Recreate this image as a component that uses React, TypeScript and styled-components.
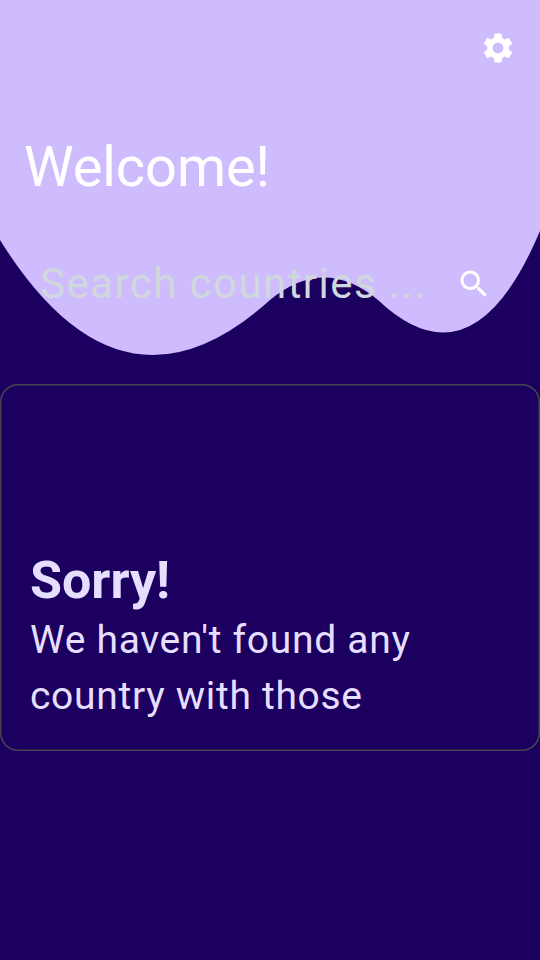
import React from "react";
import styled, { createGlobalStyle } from "styled-components";

const GlobalStyle = createGlobalStyle`
  * { box-sizing: border-box; }
  body { margin: 0; background: #1b005f; font-family: Roboto, sans-serif; }
`;

const Screen = styled.main`
  position: relative;
  display: flex;
  flex-direction: column;
  height: 960px;
  overflow: hidden;
  background: #1b005f;
`;

const Wave = styled.svg`
  position: absolute;
  inset: 0 0 auto 0;
  width: 540px;
  height: 360px;
`;

const Header = styled.header`
  position: relative;
  display: flex;
  flex-direction: column;
  height: 384px;
`;

const Toolbar = styled.div`
  display: flex;
  justify-content: flex-end;
  height: 96px;
  padding: 30px 24px 0 0;
`;

const IconButton = styled.button`
  display: flex;
  width: 36px;
  height: 36px;
  padding: 0;
  border: 0;
  background: none;
  color: #fff;

  svg { width: 36px; height: 36px; fill: currentColor; }
`;

const Title = styled.h1`
  margin: 38px 0 0 24px;
  color: #fff;
  font-size: 56px;
  font-weight: 400;
  line-height: 66px;
  letter-spacing: -0.1px;
`;

const SearchBar = styled.form`
  display: flex;
  align-items: center;
  justify-content: space-between;
  height: 60px;
  margin-top: 53px;
  padding: 1px 48px 0 40px;
`;

const SearchInput = styled.input`
  width: 400px;
  height: 50px;
  padding: 0;
  border: 0;
  outline: 0;
  background: transparent;
  color: #fff;
  font: 400 42px/50px Roboto, sans-serif;
  letter-spacing: 1.45px;

  &::placeholder { color: #cfd8dc; opacity: 1; }
`;

const Card = styled.section`
  display: flex;
  flex-direction: column;
  justify-content: flex-end;
  height: 366.5px;
  padding: 0 30px 27px;
  border-radius: 18px;
  box-shadow: inset 0 0 0 1.5px #49454f;
  color: #e6deff;
`;

const CardTitle = styled.h2`
  margin: 0;
  font-size: 52px;
  font-weight: 700;
  line-height: 62px;
`;

const CardText = styled.p`
  margin: 0;
  font-size: 39px;
  line-height: 56px;
  letter-spacing: 0.7px;
`;

export default function App() {
  return (
    <Screen>
      <GlobalStyle />
      <Wave viewBox="0 0 540 360" aria-hidden="true">
        <path fill="#cfbcff" d="M0 0H540V231Q473 389.9 378 300Q324 255 270 300Q121 434.5 0 240Z" />
      </Wave>
      <Header>
        <Toolbar>
          <IconButton aria-label="Settings">
            <svg viewBox="0 0 24 24"><path d="M19.14 12.94c.04-.3.06-.61.06-.94 0-.32-.02-.64-.07-.94l2.03-1.58c.18-.14.23-.41.12-.61l-1.92-3.32c-.12-.22-.37-.29-.59-.22l-2.39.96c-.5-.38-1.03-.7-1.62-.94l-.36-2.54c-.04-.24-.24-.41-.48-.41h-3.84c-.24 0-.43.17-.47.41l-.36 2.54c-.59.24-1.13.57-1.62.94l-2.39-.96c-.22-.08-.47 0-.59.22L2.74 8.87c-.12.21-.08.47.12.61l2.03 1.58c-.05.3-.09.63-.09.94s.02.64.07.94l-2.03 1.58c-.18.14-.23.41-.12.61l1.92 3.32c.12.22.37.29.59.22l2.39-.96c.5.38 1.03.7 1.62.94l.36 2.54c.05.24.24.41.48.41h3.84c.24 0 .44-.17.47-.41l.36-2.54c.59-.24 1.13-.56 1.62-.94l2.39.96c.22.08.47 0 .59-.22l1.92-3.32c.12-.22.07-.47-.12-.61zM12 15.6a3.6 3.6 0 1 1 0-7.2 3.6 3.6 0 0 1 0 7.2z" /></svg>
          </IconButton>
        </Toolbar>
        <Title>Welcome!</Title>
        <SearchBar onSubmit={(event) => event.preventDefault()}>
          <SearchInput placeholder="Search countries ..." aria-label="Search countries" />
          <IconButton aria-label="Search">
            <svg viewBox="0 0 24 24"><path d="M15.5 14h-.79l-.28-.27A6.47 6.47 0 0 0 16 9.5 6.5 6.5 0 1 0 9.5 16c1.61 0 3.09-.59 4.23-1.57l.27.28v.79l5 4.99L20.49 19zm-6 0C7.01 14 5 11.99 5 9.5S7.01 5 9.5 5 14 7.01 14 9.5 11.99 14 9.5 14z" /></svg>
          </IconButton>
        </SearchBar>
      </Header>
      <Card>
        <CardTitle>Sorry!</CardTitle>
        <CardText>We haven't found any<br />country with those</CardText>
      </Card>
    </Screen>
  );
}
